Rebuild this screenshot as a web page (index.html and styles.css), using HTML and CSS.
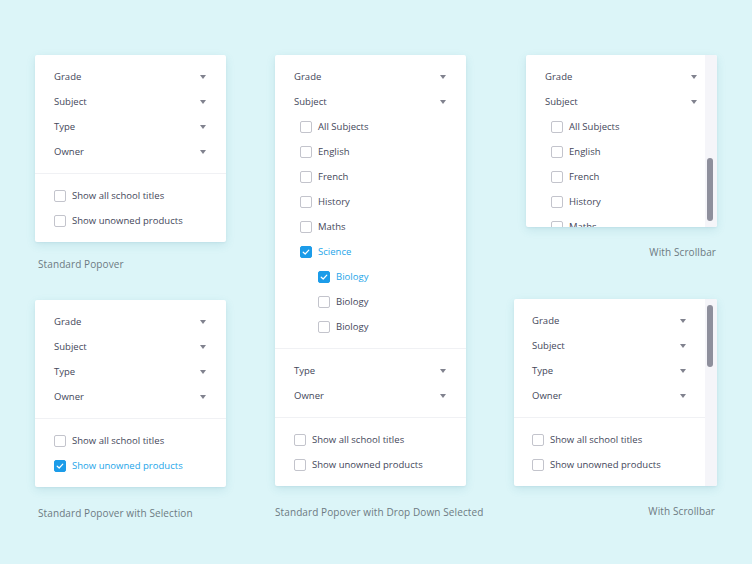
FILE: index.html
```html
<!DOCTYPE html>
<html>
<head>
<meta charset="utf-8">
<link rel="stylesheet" href="styles.css">
</head>
<body>
<div class="board">
  <div class="col col-left">
    <div class="card">
      <div class="section">
        <div class="row"><span>Grade</span><i class="caret"></i></div>
        <div class="row"><span>Subject</span><i class="caret"></i></div>
        <div class="row"><span>Type</span><i class="caret"></i></div>
        <div class="row"><span>Owner</span><i class="caret"></i></div>
      </div>
      <div class="section">
        <div class="row check"><i class="box"></i><span>Show all school titles</span></div>
        <div class="row check"><i class="box"></i><span>Show unowned products</span></div>
      </div>
    </div>
    <div class="caption cap-1">Standard Popover</div>
    <div class="card">
      <div class="section">
        <div class="row"><span>Grade</span><i class="caret"></i></div>
        <div class="row"><span>Subject</span><i class="caret"></i></div>
        <div class="row"><span>Type</span><i class="caret"></i></div>
        <div class="row"><span>Owner</span><i class="caret"></i></div>
      </div>
      <div class="section">
        <div class="row check"><i class="box"></i><span>Show all school titles</span></div>
        <div class="row check on"><i class="box"><svg viewBox="0 0 12 12"><path d="M3.2 6.2 L5.2 8 L8.8 4.2"/></svg></i><span>Show unowned products</span></div>
      </div>
    </div>
    <div class="caption cap-2">Standard Popover with Selection</div>
  </div>

  <div class="col col-mid">
    <div class="card">
      <div class="section">
        <div class="row"><span>Grade</span><i class="caret"></i></div>
        <div class="row"><span>Subject</span><i class="caret"></i></div>
        <div class="row check sub"><i class="box"></i><span>All Subjects</span></div>
        <div class="row check sub"><i class="box"></i><span>English</span></div>
        <div class="row check sub"><i class="box"></i><span>French</span></div>
        <div class="row check sub"><i class="box"></i><span>History</span></div>
        <div class="row check sub"><i class="box"></i><span>Maths</span></div>
        <div class="row check sub on"><i class="box"><svg viewBox="0 0 12 12"><path d="M3.2 6.2 L5.2 8 L8.8 4.2"/></svg></i><span>Science</span></div>
        <div class="row check subsub on"><i class="box"><svg viewBox="0 0 12 12"><path d="M3.2 6.2 L5.2 8 L8.8 4.2"/></svg></i><span>Biology</span></div>
        <div class="row check subsub"><i class="box"></i><span>Biology</span></div>
        <div class="row check subsub"><i class="box"></i><span>Biology</span></div>
      </div>
      <div class="section">
        <div class="row"><span>Type</span><i class="caret"></i></div>
        <div class="row"><span>Owner</span><i class="caret"></i></div>
      </div>
      <div class="section">
        <div class="row check"><i class="box"></i><span>Show all school titles</span></div>
        <div class="row check"><i class="box"></i><span>Show unowned products</span></div>
      </div>
    </div>
    <div class="caption cap-2 cap-mid">Standard Popover with Drop Down Selected</div>
  </div>

  <div class="col col-right">
    <div class="card scroll scroll-a">
      <div class="scroll-body">
        <div class="section">
          <div class="row"><span>Grade</span><i class="caret"></i></div>
          <div class="row"><span>Subject</span><i class="caret"></i></div>
          <div class="row check sub"><i class="box"></i><span>All Subjects</span></div>
          <div class="row check sub"><i class="box"></i><span>English</span></div>
          <div class="row check sub"><i class="box"></i><span>French</span></div>
          <div class="row check sub"><i class="box"></i><span>History</span></div>
          <div class="row check sub"><i class="box"></i><span>Maths</span></div>
        </div>
      </div>
      <div class="track"><div class="thumb thumb-a"></div></div>
    </div>
    <div class="caption cap-3">With Scrollbar</div>
    <div class="card scroll scroll-b">
      <div class="scroll-body">
        <div class="section">
          <div class="row"><span>Grade</span><i class="caret"></i></div>
          <div class="row"><span>Subject</span><i class="caret"></i></div>
          <div class="row"><span>Type</span><i class="caret"></i></div>
          <div class="row"><span>Owner</span><i class="caret"></i></div>
        </div>
        <div class="section">
          <div class="row check"><i class="box"></i><span>Show all school titles</span></div>
          <div class="row check"><i class="box"></i><span>Show unowned products</span></div>
        </div>
      </div>
      <div class="track"><div class="thumb thumb-b"></div></div>
    </div>
    <div class="caption cap-4">With Scrollbar</div>
  </div>
</div>
</body>
</html>
```

FILE: styles.css
```css
html, body {
  margin: 0;
  padding: 0;
}
body {
  background: #dcf5f8;
  width: 752px;
  height: 564px;
  overflow: hidden;
  font-family: "Open Sans", "Liberation Sans", sans-serif;
  color: #44475a;
}
.board {
  display: flex;
  padding: 55px 0 0 35px;
}
.col {
  display: flex;
  flex-direction: column;
}
.col-left { width: 191px; }
.col-mid { width: 191px; margin-left: 49px; }
.col-right { width: 203px; margin-left: 48px; align-items: flex-end; }

.card {
  background: #fff;
  border-radius: 2px;
  box-shadow: 0 3px 10px rgba(60, 140, 160, 0.14), 0 1px 2px rgba(60, 120, 140, 0.08);
  width: 191px;
  box-sizing: border-box;
}
.section {
  padding: 9px 0 9px 0;
  border-top: 1px solid #f0f1f4;
}
.section:first-child { border-top: none; }
.row {
  height: 25px;
  display: flex;
  align-items: center;
  justify-content: space-between;
  padding: 0 20px 0 19px;
  font-size: 9.5px;
  letter-spacing: 0.02px;
}
.caret {
  width: 0;
  height: 0;
  border-left: 3.5px solid transparent;
  border-right: 3.5px solid transparent;
  border-top: 4px solid #80828e;
}
.row.check {
  justify-content: flex-start;
}
.box {
  width: 12px;
  height: 12px;
  box-sizing: border-box;
  border: 1px solid #c3c4cc;
  border-radius: 2px;
  margin-right: 6px;
  flex: none;
  display: flex;
}
.box svg {
  width: 12px;
  height: 12px;
  margin: -1px;
}
.box svg path {
  fill: none;
  stroke: #fff;
  stroke-width: 1.2;
  stroke-linecap: round;
  stroke-linejoin: round;
}
.row.on { color: #1ea5e9; }
.row.on .box {
  background: #1c9ce9;
  border-color: #1c9ce9;
}
.row.sub { padding-left: 25px; }
.row.subsub { padding-left: 43px; }

.caption {
  font-size: 10px;
  line-height: 14px;
  color: #6c7a82;
  letter-spacing: 0.1px;
  white-space: nowrap;
}
.cap-1 { margin: 15px 0 29px 3px; }
.cap-2 { margin: 19px 0 0 3px; }
.cap-mid { margin-left: 0; }
.cap-3 { margin: 18px 1px 40px 0; }
.cap-4 { margin: 18px 2px 0 0; }

.scroll {
  display: flex;
  overflow: hidden;
  position: relative;
}
.scroll-body {
  flex: 1;
  overflow: hidden;
}
.scroll-a {
  height: 172px;
  width: 191px;
}
.scroll-a .scroll-body { margin-right: -12px; }
.scroll-b {
  width: 203px;
}
.scroll-b .row { padding-left: 18px; padding-right: 19px; }
.track {
  width: 12px;
  flex: none;
  background: #f5f5f9;
  position: relative;
}
.thumb {
  position: absolute;
  left: 2px;
  width: 6px;
  border-radius: 3px;
  background: #8e8f9c;
}
.thumb-a { top: 103px; height: 63px; }
.thumb-b { top: 6px; height: 62px; }
```
